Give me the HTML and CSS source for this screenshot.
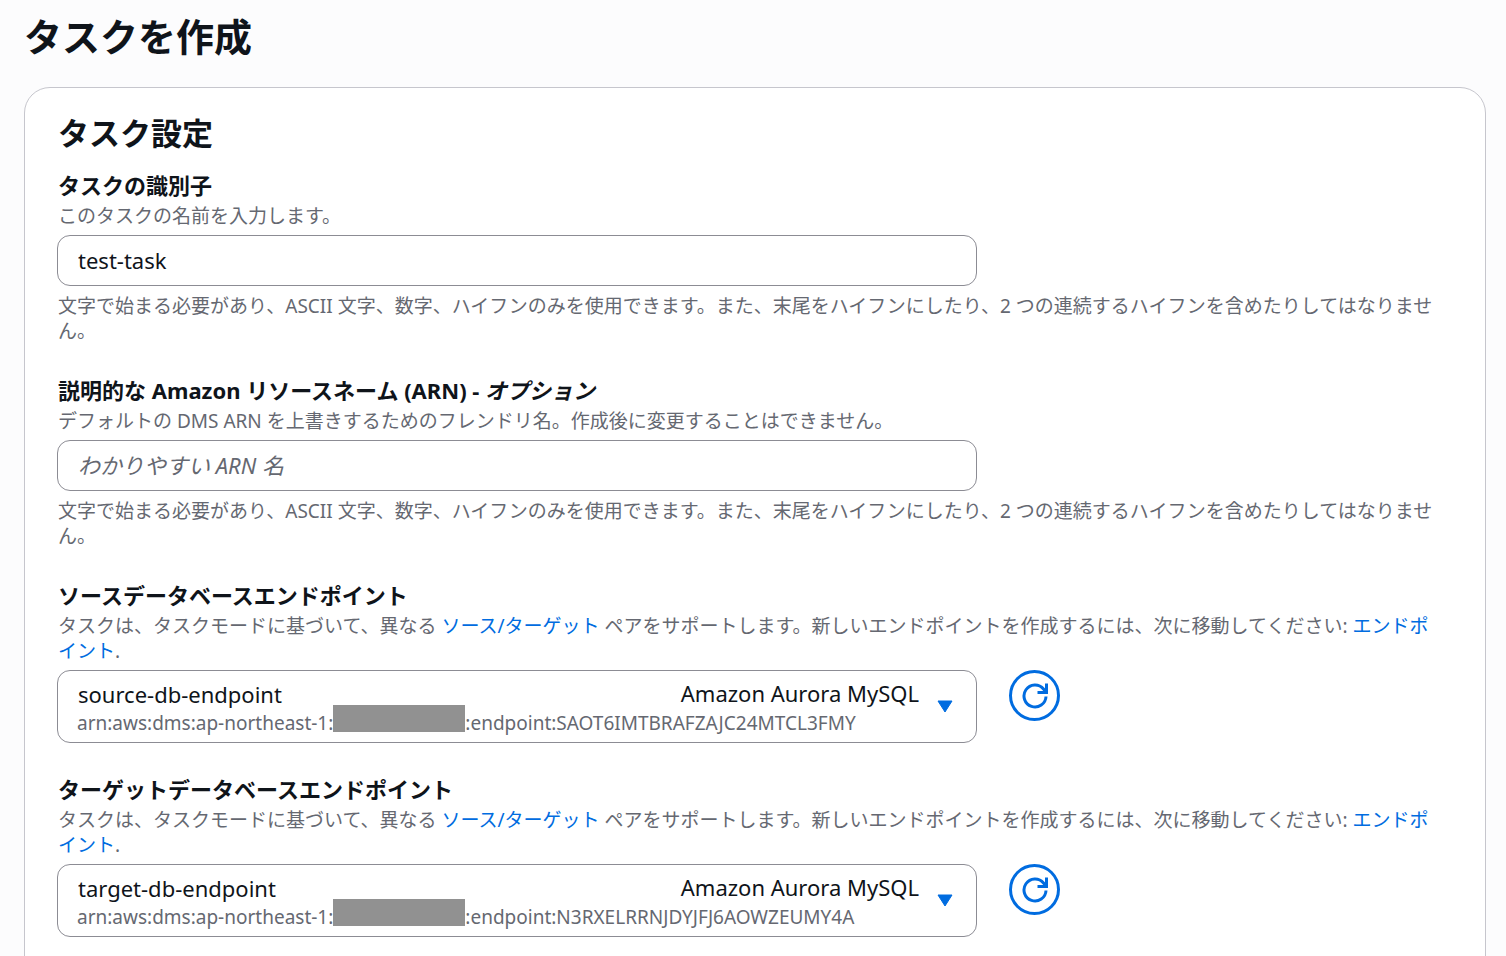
FILE: index.html
```html
<!DOCTYPE html>
<html lang="ja">
<head>
    <meta charset="UTF-8">
    <meta name="viewport" content="width=device-width, initial-scale=1.0">
    <title>タスクを作成</title>
    <link rel="stylesheet" href="styles.css">
</head>
<body>

    <h1>タスクを作成</h1>

    <form class="card">
        <h2>タスク設定</h2>

        <div class="field">
            <label for="task-id">タスクの識別子</label>
            <p class="hint">このタスクの名前を入力します。</p>
            <div class="control-row">
                <input type="text" id="task-id" value="test-task">
            </div>
            <p class="hint">文字で始まる必要があり、ASCII 文字、数字、ハイフンのみを使用できます。また、末尾をハイフンにしたり、2 つの連続するハイフンを含めたりしてはなりません。</p>
        </div>

        <div class="field">
            <label for="arn-name">説明的な Amazon リソースネーム (ARN) - <em>オプション</em></label>
            <p class="hint">デフォルトの DMS ARN を上書きするためのフレンドリ名。作成後に変更することはできません。</p>
            <div class="control-row">
                <input type="text" id="arn-name" placeholder="わかりやすい ARN 名">
            </div>
            <p class="hint">文字で始まる必要があり、ASCII 文字、数字、ハイフンのみを使用できます。また、末尾をハイフンにしたり、2 つの連続するハイフンを含めたりしてはなりません。</p>
        </div>

        <div class="field">
            <label for="source">ソースデータベースエンドポイント</label>
            <p class="hint">タスクは、タスクモードに基づいて、異なる <a href="#">ソース/ターゲット</a> ペアをサポートします。新しいエンドポイントを作成するには、次に移動してください: <a href="#">エンドポイント</a>.</p>
            <div class="control-row">
                <div class="endpoint">
                    <select id="source">
                        <option>source-db-endpoint</option>
                    </select>
                    <span class="engine">Amazon Aurora MySQL</span>
                    <span class="arn">arn:aws:dms:ap-northeast-1:<span class="mask"></span>:endpoint:SAOT6IMTBRAFZAJC24MTCL3FMY</span>
                    <svg class="caret" viewBox="0 0 16 13" aria-hidden="true"><path d="M1 1h14l-7 11z"/></svg>
                </div>
                <button type="button" class="refresh" aria-label="更新">
                    <svg viewBox="0 0 26 26" aria-hidden="true"><path d="M24 13.5A11 11 0 1 1 21.5 6L24 9M24.5 .5v9H15.500"/></svg>
                </button>
            </div>
        </div>

        <div class="field">
            <label for="target">ターゲットデータベースエンドポイント</label>
            <p class="hint">タスクは、タスクモードに基づいて、異なる <a href="#">ソース/ターゲット</a> ペアをサポートします。新しいエンドポイントを作成するには、次に移動してください: <a href="#">エンドポイント</a>.</p>
            <div class="control-row">
                <div class="endpoint">
                    <select id="target">
                        <option>target-db-endpoint</option>
                    </select>
                    <span class="engine">Amazon Aurora MySQL</span>
                    <span class="arn">arn:aws:dms:ap-northeast-1:<span class="mask"></span>:endpoint:N3RXELRRNJDYJFJ6AOWZEUMY4A</span>
                    <svg class="caret" viewBox="0 0 16 13" aria-hidden="true"><path d="M1 1h14l-7 11z"/></svg>
                </div>
                <button type="button" class="refresh" aria-label="更新">
                    <svg viewBox="0 0 26 26" aria-hidden="true"><path d="M24 13.5A11 11 0 1 1 21.5 6L24 9M24.5 .5v9H15.500"/></svg>
                </button>
            </div>
        </div>
    </form>

</body>
</html>
```
FILE: styles.css
```css
* {
    box-sizing: border-box;
}

body {
    margin: 0;
    padding: 12px 20px 24px 24px;
    background-color: #fcfcfd;
    color: #0f141a;
    font-family: "Noto Sans", "Noto Sans CJK JP", sans-serif;
    font-size: 22px;
}

h1, h2, p {
    margin: 0;
}

h1 {
    font-size: 38px;
    line-height: 48px;
}

h2 {
    margin-bottom: 16px;
    font-size: 31px;
    line-height: 40px;
}

.card {
    margin-top: 27px;
    padding: 25px 32px;
    border: 1px solid #c6c6cd;
    border-radius: 26px;
    background-color: white;
}

.field {
    margin-bottom: 30px;
}

label {
    display: block;
    margin-bottom: 2px;
    font-weight: bold;
    line-height: 33px;
}

h2, label, .hint {
    padding-left: 1px;
}

.hint {
    padding-right: 12px;
    color: #656871;
    font-size: 19px;
    line-height: 25px;
}

a {
    color: #006ce0;
    text-decoration: none;
}

.control-row {
    display: grid;
    grid-template-columns: 2fr 1fr;
    gap: 16px;
    margin-top: 6px;
}

.control-row + .hint {
    margin-top: 8px;
}

input, select {
    width: 100%;
    border: 1px solid #8c8c94;
    border-radius: 13px;
    background-color: white;
    color: #0f141a;
    font-family: inherit;
    font-size: 22px;
}

input {
    height: 51px;
    padding: 0 20px 2px;
}

input::placeholder {
    color: #656871;
    font-style: italic;
    opacity: 1;
}

/* the engine name and the arn lie over the select */
.endpoint {
    display: grid;
    grid-template-columns: 1fr auto 16px;
    grid-template-rows: 40px 33px;
    column-gap: 18px;
    padding-right: 24px;
}

select {
    grid-area: 1 / 1 / 3 / 4;
    width: auto;
    margin-right: -24px;
    padding: 0 20px 26px;
    appearance: none;
}

.engine, .arn, .caret {
    z-index: 1;
    pointer-events: none;
}

.engine {
    grid-area: 1 / 2;
    line-height: 46px;
}

.arn {
    display: flex;
    grid-area: 2 / 1 / 3 / 3;
    align-items: flex-end;
    align-self: start;
    height: 26px;
    padding-left: 20px;
    color: #656871;
    font-size: 19px;
    line-height: 25px;
}

.mask {
    width: 132px;
    height: 27px;
    margin-bottom: 4px;
    background-color: #919191;
}

.caret {
    grid-area: 1 / 3 / 3 / 4;
    align-self: center;
    width: 16px;
    fill: #006ce0;
    stroke: #006ce0;
    stroke-linejoin: round;
}

.refresh {
    display: flex;
    align-items: center;
    justify-content: center;
    width: 51px;
    height: 51px;
    margin-left: 16px;
    padding: 0;
    border: 3px solid #006ce0;
    border-radius: 50%;
    background-color: white;
    cursor: pointer;
}

.refresh svg {
    width: 26px;
    fill: none;
    stroke: #006ce0;
    stroke-width: 3;
}
```
